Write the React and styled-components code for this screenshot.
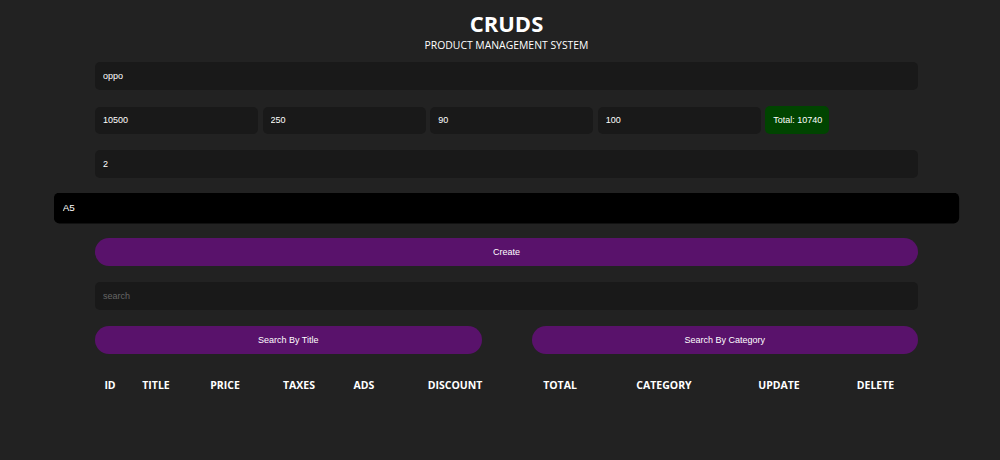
import React from "react";
import styled, { createGlobalStyle } from "styled-components";

const Global = createGlobalStyle`
  html, body { margin: 0; padding: 0; background: #222; }
  body { color: #fff; font-family: "Liberation Sans", Arial, sans-serif; }
  #root { padding-left: 13px; }
  * { box-sizing: border-box; }
`;

const Page = styled.div`
  width: 823px;
  margin: 0 auto;
`;

const Head = styled.header`
  text-align: center;
  padding-top: 9px;
  margin-bottom: 8px;
`;

const Title = styled.h2`
  margin: 0;
  font-family: "Open Sans", sans-serif;
  font-weight: 700;
  font-size: 22px;
  line-height: 28px;
  color: #fff;
`;

const Subtitle = styled.p`
  margin: 0;
  font-family: "Open Sans", sans-serif;
  font-size: 10.4px;
  line-height: 17px;
  color: #fff;
`;

const Field = styled.input`
  display: block;
  width: 100%;
  height: 28px;
  margin: 0 0 16px;
  padding: 0 8px;
  border: none;
  outline: none;
  border-radius: 5px;
  background: ${(p) => (p.$focused ? "#000" : "#191919")};
  color: #fff;
  caret-color: #fff;
  font-family: "Liberation Sans", Arial, sans-serif;
  font-size: 9px;
  transform: ${(p) => (p.$focused ? "scale(1.1)" : "none")};
  &::placeholder { color: #666; }
`;

const PriceRow = styled.div`
  display: flex;
  align-items: center;
  gap: 4.4px;
  margin-bottom: 16px;
`;

const PriceField = styled(Field)`
  width: 163.2px;
  height: 27px;
  margin: 0;
`;

const Total = styled.small`
  display: flex;
  align-items: center;
  height: 28px;
  padding: 0 7px 0 8px;
  border-radius: 5px;
  background: #040;
  color: #fff;
  font-size: 9px;
`;

const Button = styled.button`
  display: block;
  width: 100%;
  height: 28px;
  margin: 0 0 16px;
  border: none;
  border-radius: 20px;
  background: #59126b;
  color: #fff;
  font-family: "Liberation Sans", Arial, sans-serif;
  font-size: 9px;
  cursor: pointer;
`;

const SearchRow = styled.div`
  display: grid;
  grid-template-columns: 1fr 1fr;
  gap: 50px;
  & > button { margin: 0; }
`;

const HeaderRow = styled.div`
  display: grid;
  grid-template-columns: 30px 62px 76px 72px 58px 124px 86px 122px 108px 85px;
  margin-top: 15px;
`;

const Th = styled.div`
  text-align: center;
  font-family: "Open Sans", sans-serif;
  font-weight: 700;
  font-size: 10.5px;
  line-height: 32px;
  color: #fff;
`;

const cols = ["ID", "TITLE", "PRICE", "TAXES", "ADS", "DISCOUNT", "TOTAL", "CATEGORY", "UPDATE", "DELETE"];

export default function App() {
  return (
    <>
      <Global />
      <Page>
        <Head>
          <Title>CRUDS</Title>
          <Subtitle>PRODUCT MANAGEMENT SYSTEM</Subtitle>
        </Head>
        <Field type="text" placeholder="title" defaultValue="oppo" />
        <PriceRow>
          <PriceField type="number" placeholder="price" defaultValue="10500" />
          <PriceField type="number" placeholder="taxes" defaultValue="250" />
          <PriceField type="number" placeholder="ads" defaultValue="90" />
          <PriceField type="number" placeholder="discount" defaultValue="100" />
          <Total>Total: 10740</Total>
        </PriceRow>
        <Field type="number" placeholder="count" defaultValue="2" />
        <Field type="text" placeholder="category" defaultValue="A5" $focused autoFocus />
        <Button>Create</Button>
        <Field type="text" placeholder="search" />
        <SearchRow>
          <Button>Search By Title</Button>
          <Button>Search By Category</Button>
        </SearchRow>
        <HeaderRow>
          {cols.map((c) => (
            <Th key={c}>{c}</Th>
          ))}
        </HeaderRow>
      </Page>
    </>
  );
}
